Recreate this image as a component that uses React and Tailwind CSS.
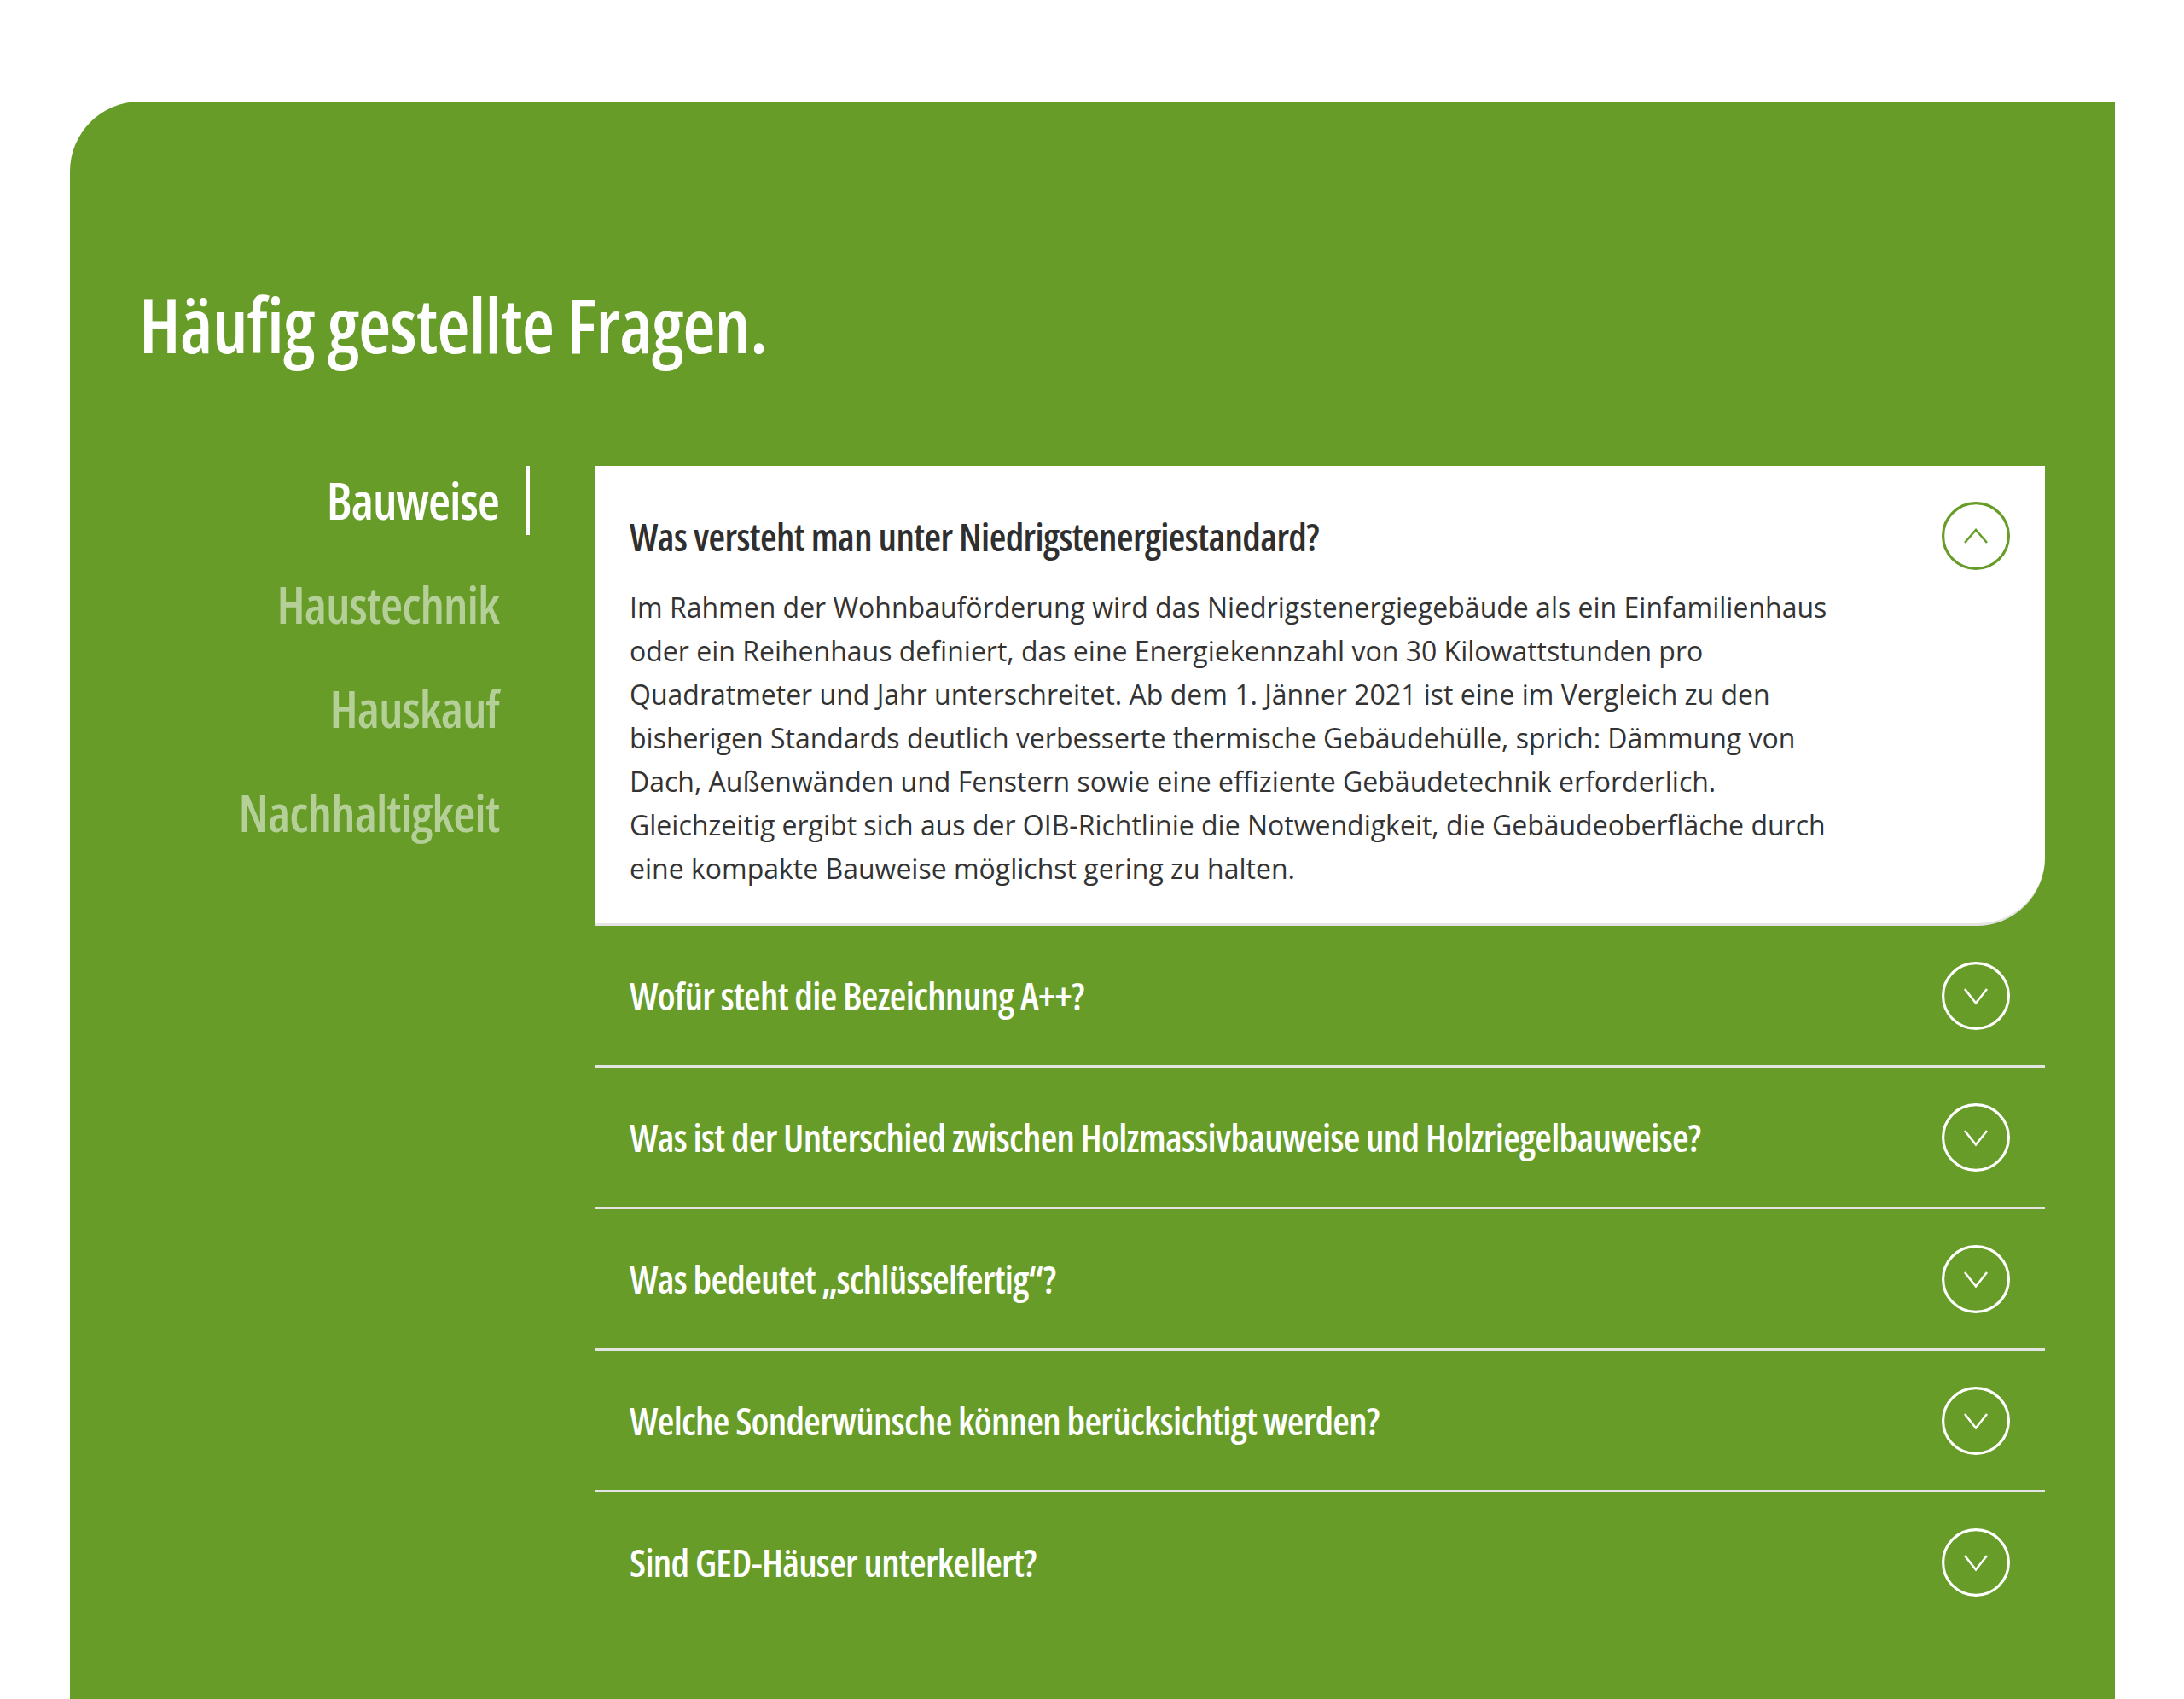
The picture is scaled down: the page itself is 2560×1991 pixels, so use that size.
import React, { useState } from 'react';

const categories = ['Bauweise', 'Haustechnik', 'Hauskauf', 'Nachhaltigkeit'];

const questions = [
  {
    q: 'Was versteht man unter Niedrigstenergiestandard?',
    a: 'Im Rahmen der Wohnbauförderung wird das Niedrigstenergiegebäude als ein Einfamilienhaus oder ein Reihenhaus definiert, das eine Energiekennzahl von 30 Kilowattstunden pro Quadratmeter und Jahr unterschreitet. Ab dem 1. Jänner 2021 ist eine im Vergleich zu den bisherigen Standards deutlich verbesserte thermische Gebäudehülle, sprich: Dämmung von Dach, Außenwänden und Fenstern sowie eine effiziente Gebäudetechnik erforderlich. Gleichzeitig ergibt sich aus der OIB-Richtlinie die Notwendigkeit, die Gebäudeoberfläche durch eine kompakte Bauweise möglichst gering zu halten.',
  },
  { q: 'Wofür steht die Bezeichnung A++?' },
  { q: 'Was ist der Unterschied zwischen Holzmassivbauweise und Holzriegelbauweise?' },
  { q: 'Was bedeutet „schlüsselfertig“?' },
  { q: 'Welche Sonderwünsche können berücksichtigt werden?' },
  { q: 'Sind GED-Häuser unterkellert?' },
];

// round toggle icon, chevron up when open
const Toggle = ({ open }) => (
  <svg width="80" height="80" viewBox="0 0 80 80" className="shrink-0" fill="none">
    <circle cx="40" cy="40" r="38.4" stroke={open ? '#669c27' : '#ffffff'} strokeWidth="3.2" />
    {open ? (
      <polyline points="27,48 40,33 53,48" stroke="#669c27" strokeWidth="2.6" />
    ) : (
      <polyline points="27,32 40,48.5 53,32" stroke="#ffffff" strokeWidth="2.6" />
    )}
  </svg>
);

export default function App() {
  const [active, setActive] = useState(0);
  const [openIndex, setOpenIndex] = useState(0);

  return (
    <div className="h-[1991px] overflow-hidden bg-white pt-[119px] pl-[82px] pr-[81px]">
      <section className="bg-[#669c27] rounded-tl-[82px] pl-[81px] pr-[82px] pt-[217px] pb-[300px]">
        <h2 className="font-['Open_Sans',sans-serif] font-stretch-condensed font-semibold text-[88px] tracking-[-0.8px] leading-none text-white">
          Häufig gestellte Fragen.
        </h2>

        <div className="flex mt-[122px]">
          {/* categories */}
          <nav className="w-[458px] shrink-0 mr-[76px] flex flex-col gap-[41px]">
            {categories.map((c, i) => (
              <button
                key={c}
                onClick={() => setActive(i)}
                className="flex justify-end items-stretch h-[81px]"
              >
                <span
                  className={
                    "font-['Open_Sans',sans-serif] font-stretch-condensed font-semibold text-[60px] tracking-[-1px] leading-[81px] " +
                    (i === active ? 'text-white' : 'text-[#b4cf97]')
                  }
                >
                  {c}
                </span>
                <span className={'w-[4px] ml-[32px] ' + (i === active ? 'bg-white' : 'bg-transparent')} />
              </button>
            ))}
          </nav>

          {/* accordion */}
          <div className="flex-1">
            {questions.map((item, i) => {
              const open = i === openIndex && item.a;
              const last = i === questions.length - 1;
              if (open) {
                return (
                  <div
                    key={i}
                    className="bg-white rounded-br-[80px] border-b-[3px] border-[#e4e4e4] pl-[41px] pr-[41px] pt-[42px] pb-[39px]"
                  >
                    <button onClick={() => setOpenIndex(-1)} className="w-full flex items-center justify-between text-left">
                      <span className="font-['Open_Sans',sans-serif] font-stretch-condensed font-semibold text-[45px] tracking-[-0.6px] leading-none text-[#2f2f2f]">
                        {item.q}
                      </span>
                      <Toggle open />
                    </button>
                    <p className="mt-[18px] w-[1445px] font-['Open_Sans',sans-serif] text-[32px] leading-[51px] text-[#333333]">
                      {item.a}
                    </p>
                  </div>
                );
              }
              return (
                <button
                  key={i}
                  onClick={() => setOpenIndex(i)}
                  className={
                    'w-full flex items-center justify-between text-left pl-[41px] pr-[41px] py-[41.5px] ' +
                    (last ? '' : 'border-b-[3px] border-[#e4e4e4]')
                  }
                >
                  <span className="font-['Open_Sans',sans-serif] font-stretch-condensed font-semibold text-[45px] tracking-[-0.7px] leading-none text-white">
                    {item.q}
                  </span>
                  <Toggle open={false} />
                </button>
              );
            })}
          </div>
        </div>
      </section>
    </div>
  );
}
